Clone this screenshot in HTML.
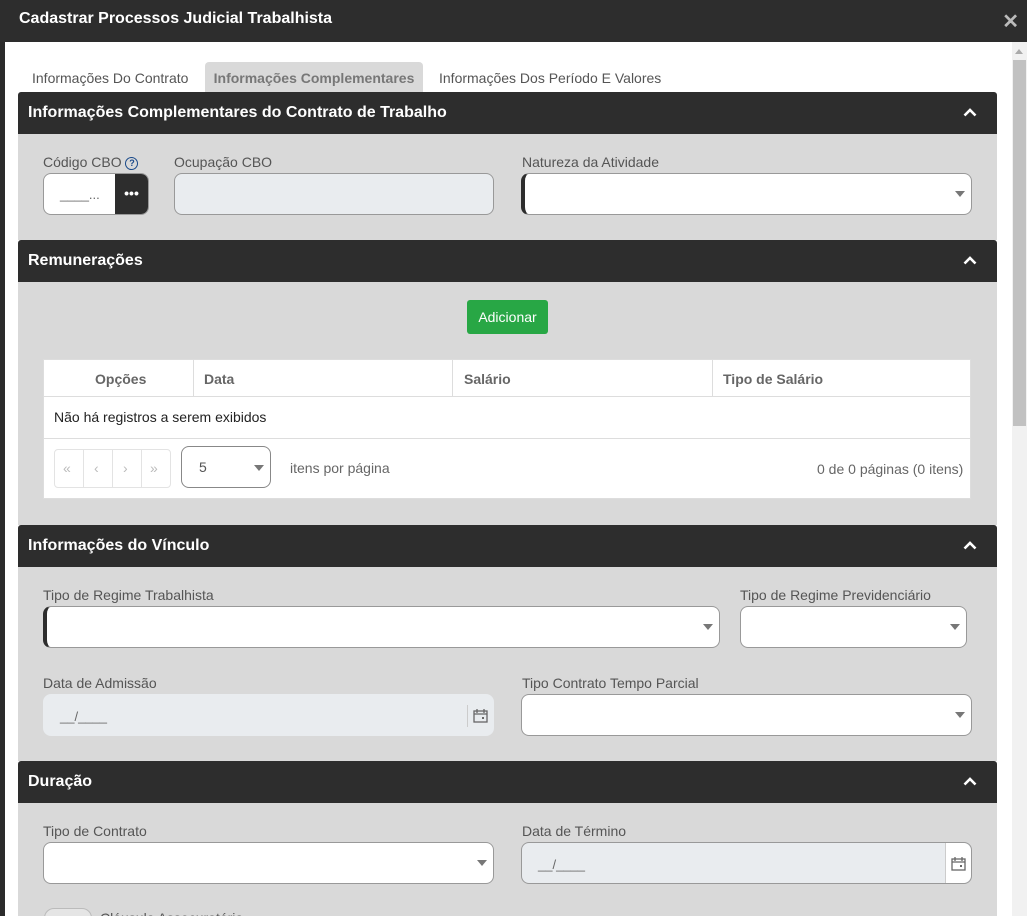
<!DOCTYPE html>
<html style="width:1027px;height:916px;overflow:hidden"><head><meta charset="utf-8"><style>
*{box-sizing:border-box;margin:0;padding:0}
body{width:1027px;height:916px;overflow:hidden;background:#2b2b2b;font-family:"Liberation Sans",sans-serif;font-size:14px;color:#555;position:relative}
.a{position:absolute}
.hdr{left:0;top:0;width:1027px;height:42px;background:#2d2d2d;color:#fff;font-weight:bold;font-size:16px;padding:10px 0 0 19px}
.close{right:8px;top:9px;color:#bbb;font-size:20px;font-weight:bold}
.modal{left:5px;top:42px;width:1007px;height:874px;background:#fff}
.sb{left:1012px;top:42px;width:15px;height:874px;background:#f1f1f1}
.thumb{left:1013px;top:60px;width:13px;height:366px;background:#c1c1c1}
.tab{top:62px;height:30px;padding-top:8px;color:#555;font-size:14px}
.sec{left:18px;width:979px;height:42px;background:#2d2d2d;color:#fff;font-weight:bold;font-size:16px;padding:12px 0 0 10px;border-radius:3px 3px 0 0}
.sec svg{position:absolute;right:20px;top:15px}
.body{left:18px;width:979px;background:#d9d9d9}
.lbl{font-size:14px;color:#555}
.in{height:42px;border:1px solid #999;border-radius:8px;background:#fff}
.dis{background:#e9ecef}
.req{border-left:4px solid #2d2d2d}
.car{position:absolute;right:6px;top:17px;width:0;height:0;border-left:5px solid transparent;border-right:5px solid transparent;border-top:6px solid #777}
.mask{position:absolute;left:16px;top:14px;color:#666;font-size:13px}
.cal{position:absolute;right:0;top:10px;width:26px;height:22px;border-left:1px solid #ccc}
</style></head><body>
<div class="a hdr">Cadastrar Processos Judicial Trabalhista</div>
<div class="a close">✕</div>
<div class="a modal"></div>
<div class="a sb"></div><div class="a thumb"></div>
<div class="a" style="left:1015px;top:49px;border-left:4px solid transparent;border-right:4px solid transparent;border-bottom:5px solid #aaa"></div>

<div class="a tab" style="left:32px">Informações Do Contrato</div>
<div class="a tab" style="left:205px;width:218px;background:#d9d9d9;color:#777;font-weight:bold;text-align:center;border-radius:4px 4px 0 0">Informações Complementares</div>
<div class="a tab" style="left:439px">Informações Dos Período E Valores</div>

<svg width="0" height="0" style="position:absolute"><defs><symbol id="chev" viewBox="0 0 14 10"><path d="M1.5 8.5L7 3l5.5 5.5" fill="none" stroke="#fff" stroke-width="2.6"/></symbol></defs></svg>

<div class="a sec" style="top:92px">Informações Complementares do Contrato de Trabalho<svg width="14" height="10"><use href="#chev"/></svg></div>
<div class="a body" style="top:134px;height:106px"></div>
<div class="a lbl" style="left:43px;top:154px">Código CBO <span style="display:inline-block;width:13px;height:13px;border:1.5px solid #1a4a8a;border-radius:50%;font-size:9px;line-height:10px;text-align:center;color:#1a4a8a;font-weight:bold;vertical-align:1px">?</span></div>
<div class="a in" style="left:43px;top:173px;width:106px;overflow:hidden"><span class="mask" style="left:16px;top:13px">____...</span><div style="position:absolute;right:0;top:0;width:33px;height:42px;background:#2d2d2d;color:#fff;text-align:center;font-weight:bold;line-height:38px">•••</div></div>
<div class="a lbl" style="left:174px;top:154px">Ocupação CBO</div>
<div class="a in dis" style="left:174px;top:173px;width:320px"></div>
<div class="a lbl" style="left:522px;top:154px">Natureza da Atividade</div>
<div class="a in req" style="left:521px;top:173px;width:451px"><i class="car"></i></div>

<div class="a sec" style="top:240px">Remunerações<svg width="14" height="10"><use href="#chev"/></svg></div>
<div class="a body" style="top:282px;height:243px"></div>
<div class="a" style="left:467px;top:300px;width:81px;height:34px;background:#28a745;color:#fff;border-radius:3px;text-align:center;line-height:34px;font-size:14px">Adicionar</div>
<div class="a" style="left:43px;top:359px;width:928px;height:140px;background:#fff;border:1px solid #ddd"></div>
<div class="a" style="left:44px;top:360px;width:926px;height:37px;border-bottom:1px solid #ddd;font-weight:bold;color:#666;font-size:14px">
<span class="a" style="left:51px;top:11px">Opções</span><span class="a" style="left:149px;top:0;height:37px;border-left:1px solid #ddd"></span>
<span class="a" style="left:160px;top:11px">Data</span><span class="a" style="left:408px;top:0;height:37px;border-left:1px solid #ddd"></span>
<span class="a" style="left:420px;top:11px">Salário</span><span class="a" style="left:668px;top:0;height:37px;border-left:1px solid #ddd"></span>
<span class="a" style="left:679px;top:11px">Tipo de Salário</span></div>
<div class="a" style="left:54px;top:409px;color:#222">Não há registros a serem exibidos</div>
<div class="a" style="left:44px;top:438px;width:926px;border-top:1px solid #ddd"></div>
<div class="a" style="left:54px;top:449px;width:117px;height:39px;border:1px solid #e3e3e3;border-radius:4px;color:#bbb;font-size:14px">
<span class="a" style="left:8px;top:10px">«</span><span class="a" style="left:28px;top:0;height:37px;border-left:1px solid #e3e3e3"></span><span class="a" style="left:39px;top:10px">‹</span><span class="a" style="left:57px;top:0;height:37px;border-left:1px solid #e3e3e3"></span><span class="a" style="left:68px;top:10px">›</span><span class="a" style="left:86px;top:0;height:37px;border-left:1px solid #e3e3e3"></span><span class="a" style="left:95px;top:10px">»</span></div>
<div class="a" style="left:181px;top:446px;width:90px;height:42px;border:1px solid #888;border-radius:8px;background:#fff"><span class="a" style="left:17px;top:12px;color:#555">5</span><i class="car" style="right:6px;top:18px"></i></div>
<div class="a" style="left:290px;top:460px;color:#666">itens por página</div>
<div class="a" style="left:817px;top:461px;color:#666">0 de 0 páginas (0 itens)</div>

<div class="a sec" style="top:525px">Informações do Vínculo<svg width="14" height="10"><use href="#chev"/></svg></div>
<div class="a body" style="top:567px;height:194px"></div>
<div class="a lbl" style="left:43px;top:587px">Tipo de Regime Trabalhista</div>
<div class="a in req" style="left:43px;top:606px;width:677px"><i class="car"></i></div>
<div class="a lbl" style="left:740px;top:587px">Tipo de Regime Previdenciário</div>
<div class="a in" style="left:740px;top:606px;width:227px"><i class="car"></i></div>
<div class="a lbl" style="left:43px;top:675px">Data de Admissão</div>
<div class="a in dis" style="left:43px;top:694px;width:451px;border-color:#e9ecef"><span class="mask">__/____</span><span class="cal"><svg width="26" height="22"><rect x="6" y="6" width="13" height="11" fill="none" stroke="#666" stroke-width="1.3"/><path d="M6 9h13M9 4v4M16 4v4" stroke="#666" stroke-width="1.3"/><rect x="14" y="12" width="2" height="2" fill="#666"/></svg></span></div>
<div class="a lbl" style="left:522px;top:675px">Tipo Contrato Tempo Parcial</div>
<div class="a in" style="left:521px;top:694px;width:451px"><i class="car"></i></div>

<div class="a sec" style="top:761px">Duração<svg width="14" height="10"><use href="#chev"/></svg></div>
<div class="a body" style="top:803px;height:113px"></div>
<div class="a lbl" style="left:43px;top:823px">Tipo de Contrato</div>
<div class="a in" style="left:43px;top:842px;width:451px"><i class="car"></i></div>
<div class="a lbl" style="left:522px;top:823px">Data de Término</div>
<div class="a in dis" style="left:521px;top:842px;width:451px"><span class="mask">__/____</span><span class="cal" style="background:#fff;border-radius:0 8px 8px 0;top:0;height:40px;padding-top:10px"><svg width="26" height="22"><rect x="6" y="6" width="13" height="11" fill="none" stroke="#666" stroke-width="1.3"/><path d="M6 9h13M9 4v4M16 4v4" stroke="#666" stroke-width="1.3"/><rect x="14" y="12" width="2" height="2" fill="#666"/></svg></span></div>
<div class="a" style="left:44px;top:908px;width:48px;height:20px;border:1px solid #bbb;border-radius:10px;background:#e5e5e5"></div>
<div class="a lbl" style="left:100px;top:910px">Cláusula Assecuratória</div>
</body></html>
